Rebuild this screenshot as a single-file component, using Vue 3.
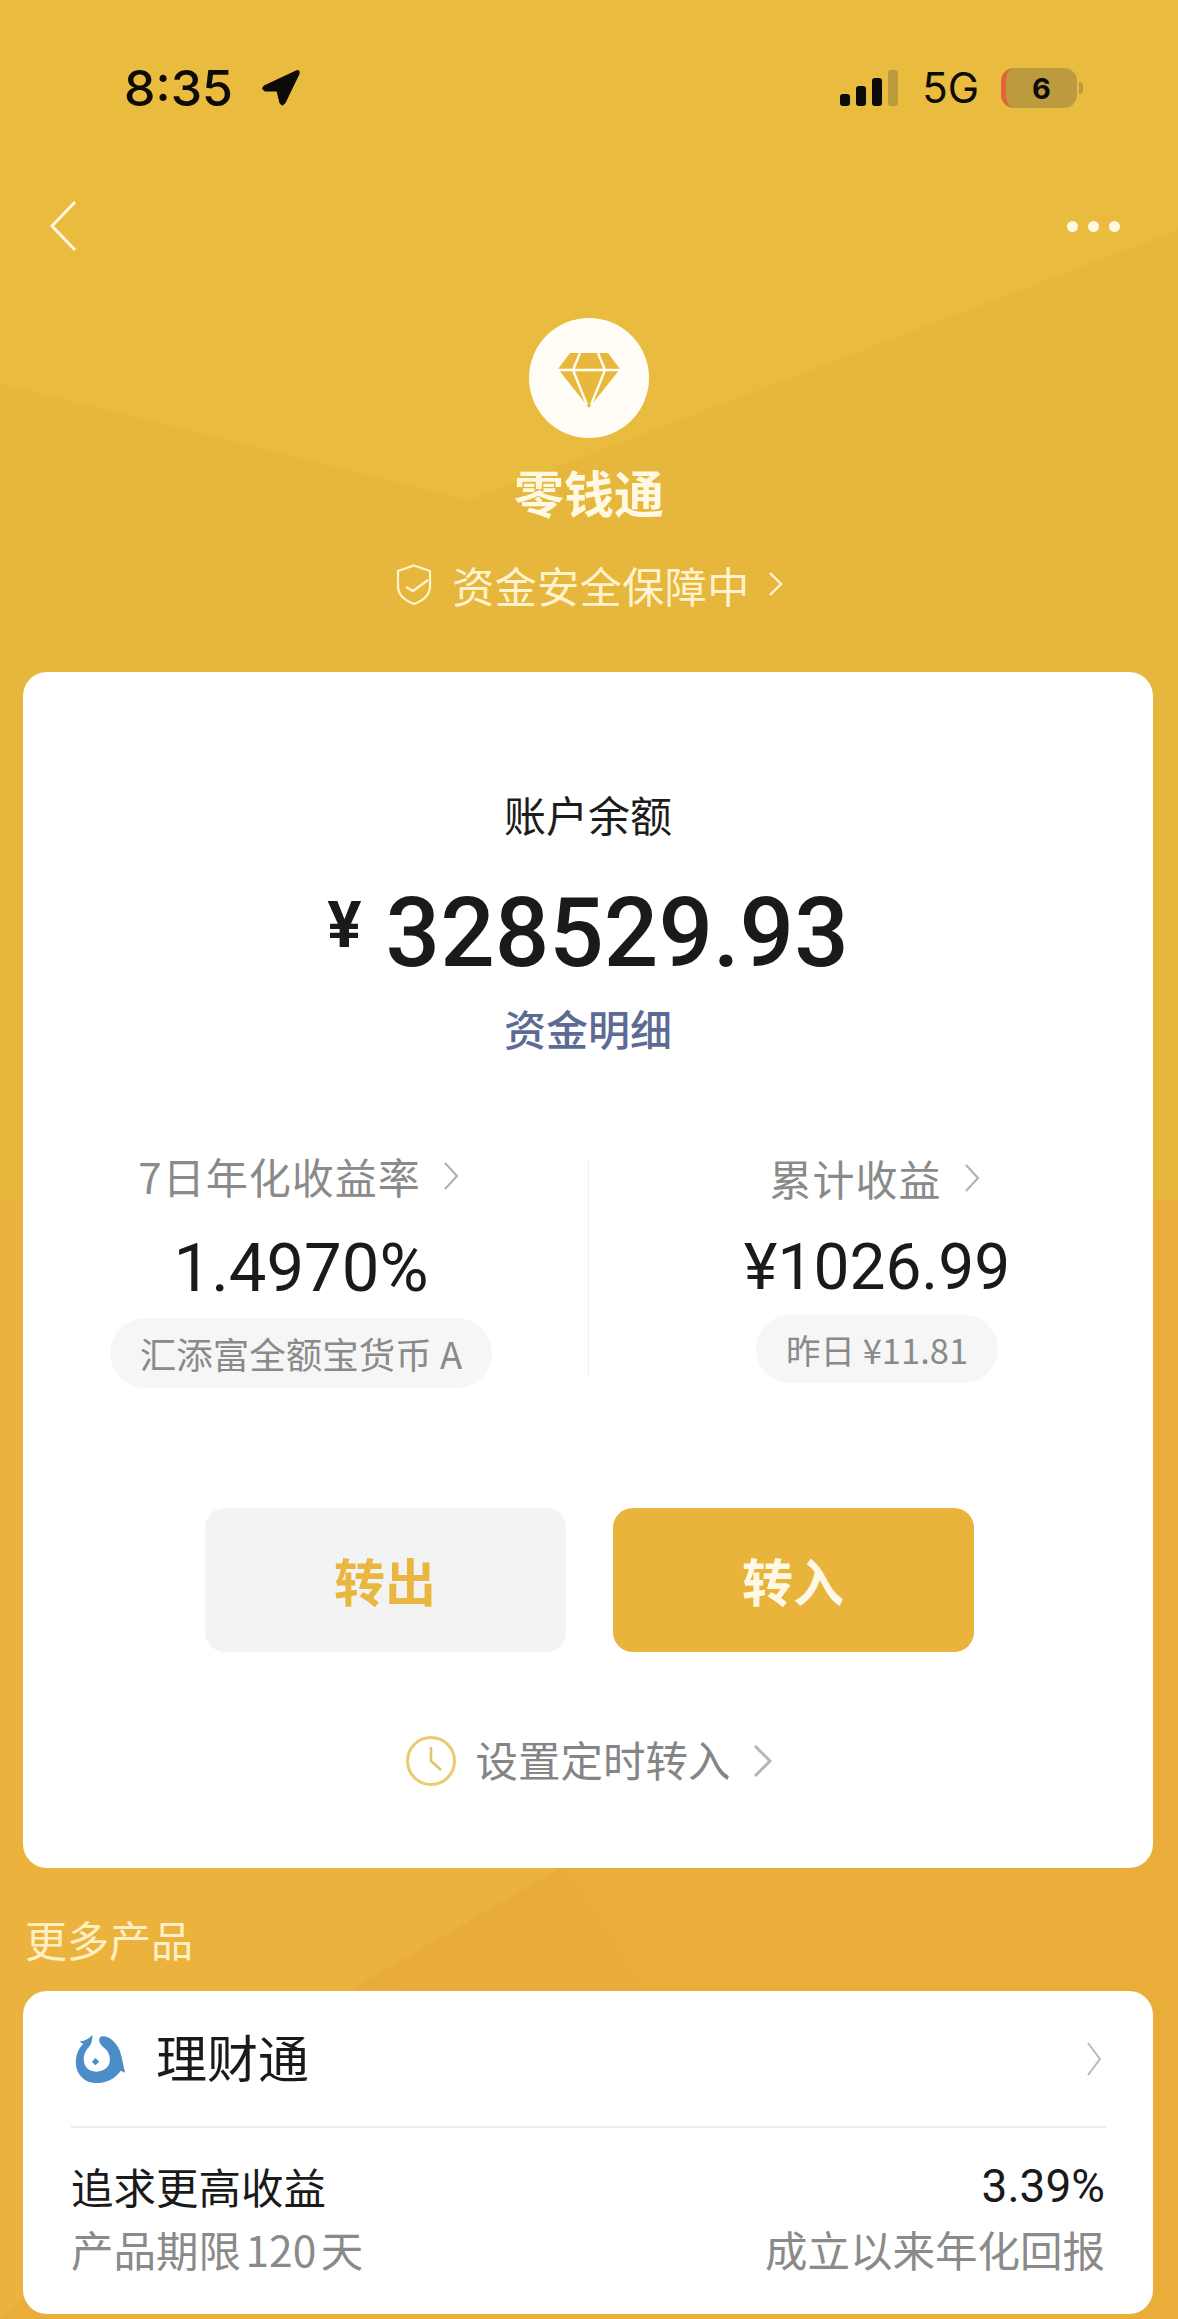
<template>
  <div class="page">
    <svg class="decor" width="1178" height="2319" viewBox="0 0 1178 2319" aria-hidden="true">
      <polygon points="0,384 470,500 1178,230 1178,1200 0,1200" fill="#E7B63C" />
      <polygon points="0,1200 1178,1200 1178,2319 0,2319" fill="#EAAD39" />
      <polygon points="0,1200 0,2319 300,2060 560,1868 700,1200" fill="#EBB33D" />
      <polygon points="560,1868 350,1990 640,1990" fill="#E9AC3A" />
    </svg>

    <div class="content">
      <header class="status">
        <div class="status-left">
          <span class="time">8:35</span>
          <svg class="arrow" width="40" height="38" viewBox="0 0 40 38">
            <path d="M3 17 L35 2 Q39 0 38 5 L24 34 Q21 38 19 34 L16 22 L4 22 Q0 20 3 17 Z" fill="#0d0b08" stroke="#0d0b08" stroke-width="1" />
          </svg>
        </div>
        <div class="status-right">
          <svg class="signal" width="58" height="36" viewBox="0 0 58 36">
            <rect x="0" y="24" width="10" height="12" rx="3" fill="#0d0b08" />
            <rect x="16" y="16" width="10" height="20" rx="3" fill="#0d0b08" />
            <rect x="32" y="8" width="10" height="28" rx="3" fill="#0d0b08" />
            <rect x="48" y="0" width="10" height="36" rx="3" fill="#BC9A3E" />
          </svg>
          <span class="net">5G</span>
          <div class="battery"><span>6</span></div>
          <span class="battery-tip"></span>
        </div>
      </header>

      <nav class="nav">
        <svg width="28" height="52" viewBox="0 0 28 52">
          <path d="M26 2 L3 26 L26 50" fill="none" stroke="#FFF8E2" stroke-width="3" />
        </svg>
        <div class="dots"><i></i><i></i><i></i></div>
      </nav>

      <section class="hero">
        <div class="gem-wrap">
          <svg class="gem" width="62" height="55" viewBox="0 0 62 55">
            <polygon points="12,0 50,0 62,16 31,55 0,16" fill="#E8B83C" />
            <path d="M0 17 H62 M22 0 L15 17 L29 52 M40 0 L47 17 L33 52" fill="none" stroke="#FFFDF5" stroke-width="2.4" />
          </svg>
        </div>
        <h1 class="title">零钱通</h1>
        <div class="safe">
          <svg width="36" height="41" viewBox="0 0 36 41">
            <path d="M18 1.5 L34 7 V22 C34 31 26 37 18 40 C10 37 2 31 2 22 V7 Z" fill="none" stroke="#FFF3CF" stroke-width="2.2" />
            <path d="M10 23 L17 27 L32 16" fill="none" stroke="#FFF3CF" stroke-width="2.4" />
          </svg>
          <span>资金安全保障中</span>
          <svg width="15" height="26" viewBox="0 0 15 26">
            <path d="M2 2 L13 13 L2 24" fill="none" stroke="#FFF3CF" stroke-width="2.4" />
          </svg>
        </div>
      </section>

      <main class="card balance">
        <div class="bal-label">账户余额</div>
        <div class="amount"><span class="yen">¥</span><span>328529.93</span></div>
        <div class="detail">资金明细</div>

        <div class="stats">
          <div class="stat left">
            <div class="stat-label">
              <span>7日年化收益率</span>
              <svg width="16" height="30" viewBox="0 0 16 30"><path d="M2 2 L14 15 L2 28" fill="none" stroke="#b3b3b3" stroke-width="2.2" /></svg>
            </div>
            <div class="stat-value">1.4970%</div>
            <div class="pill">汇添富全额宝货币 A</div>
          </div>
          <div class="divider"></div>
          <div class="stat right">
            <div class="stat-label">
              <span>累计收益</span>
              <svg width="16" height="30" viewBox="0 0 16 30"><path d="M2 2 L14 15 L2 28" fill="none" stroke="#b3b3b3" stroke-width="2.2" /></svg>
            </div>
            <div class="stat-value">¥1026.99</div>
            <div class="pill">昨日 ¥11.81</div>
          </div>
        </div>

        <div class="buttons">
          <div class="btn out">转出</div>
          <div class="btn in">转入</div>
        </div>

        <div class="timer">
          <svg width="52" height="52" viewBox="0 0 52 52">
            <circle cx="26" cy="26" r="23.5" fill="none" stroke="#EBCB70" stroke-width="3" />
            <path d="M26 12 V26 L36 35" fill="none" stroke="#E3C270" stroke-width="2.6" />
          </svg>
          <span>设置定时转入</span>
          <svg width="20" height="34" viewBox="0 0 20 34"><path d="M2 2 L17 17 L2 32" fill="none" stroke="#b5b5b5" stroke-width="3" /></svg>
        </div>
      </main>

      <div class="more">更多产品</div>

      <section class="card product">
        <div class="prod-head">
          <svg class="logo" width="51" height="50" viewBox="76 100 152 150">
            <path d="M150 110 C165 100 195 115 210 150 C218 175 220 195 226 216 L213 210 C195 236 165 249 135 247 C105 246 80 222 78 190 C77 165 85 145 100 130 L88 122 C100 122 118 115 128 102 C128 118 125 128 118 138 C100 155 98 180 107 196 C118 216 152 220 172 200 C184 186 182 165 172 150 C160 138 142 128 150 110 Z M137 172 L148 183 L137 194 L126 183 Z" fill="#4A8DC9" />
          </svg>
          <span class="prod-name">理财通</span>
          <svg class="prod-chev" width="16" height="36" viewBox="0 0 16 36"><path d="M2 2 L14 18 L2 34" fill="none" stroke="#b8b8b8" stroke-width="2" /></svg>
        </div>
        <div class="prod-line"></div>
        <div class="prod-row first"><span>追求更高收益</span><span class="num">3.39%</span></div>
        <div class="prod-row second"><span class="term">产品期限 120 天</span><span>成立以来年化回报</span></div>
      </section>
    </div>
  </div>
</template>

<script setup>
</script>

<style>
html, body { margin: 0; padding: 0; }
</style>

<style scoped>
.page {
  position: relative;
  width: 1178px;
  height: 2319px;
  overflow: hidden;
  background: #E9BB3E;
  font-family: "Noto Sans CJK SC", "Liberation Sans", sans-serif;
}
.decor { position: absolute; left: 0; top: 0; }
.content { position: relative; }

.status {
  display: flex;
  justify-content: space-between;
  align-items: center;
  height: 50px;
  padding: 63px 95px 0 124px;
}
.status-left { display: flex; align-items: center; gap: 28px; }
.time {
  font-family: Inter, "Liberation Sans", sans-serif;
  font-weight: 500;
  font-size: 50px;
  line-height: 50px;
  color: #0d0b08;
}
.status-right { display: flex; align-items: center; }
.net {
  font-family: Inter, "Liberation Sans", sans-serif;
  font-size: 42px;
  line-height: 50px;
  color: #0d0b08;
  margin: 0 22px 0 24px;
}
.battery {
  position: relative;
  width: 76px;
  height: 40px;
  box-sizing: border-box;
  border-radius: 13px;
  background: #BC9A3E;
  border-left: 5px solid #E0633A;
  display: flex;
  align-items: center;
  justify-content: center;
  font-family: Inter, "Liberation Sans", sans-serif;
  font-weight: 700;
  font-size: 29px;
  color: #0d0b08;
}
.battery-tip {
  width: 4px;
  height: 12px;
  margin-left: 2px;
  border-radius: 0 4px 4px 0;
  background: #BC9A3E;
}

.nav {
  display: flex;
  justify-content: space-between;
  align-items: center;
  height: 52px;
  margin-top: 87px;
  padding: 0 58px 0 49px;
}
.dots { display: flex; gap: 10px; }
.dots i { width: 11px; height: 11px; border-radius: 50%; background: #FFF8E2; }

.hero { display: flex; flex-direction: column; align-items: center; margin-top: 66px; }
.gem-wrap {
  width: 120px;
  height: 120px;
  border-radius: 50%;
  background: #FFFDF5;
  display: flex;
  align-items: center;
  justify-content: center;
}
.gem { margin-top: 5px; }
.title {
  margin: 23px 0 0;
  font-size: 50px;
  line-height: 60px;
  font-weight: 700;
  color: #FFF8E2;
}
.safe {
  display: flex;
  align-items: center;
  height: 50px;
  margin-top: 38px;
  margin-left: 1px;
  font-size: 42px;
  letter-spacing: 0.5px;
  color: #FFF3CF;
}
.safe span { margin: 0 18px 0 20px; }

.card {
  margin: 0 25px 0 23px;
  background: #fff;
  border-radius: 24px;
}
.balance {
  margin-top: 63px;
  padding: 117px 0 81px;
  display: flex;
  flex-direction: column;
  align-items: center;
}
.bal-label {
  font-size: 42px;
  line-height: 50px;
  color: #1c1c1c;
}
.amount {
  display: flex;
  align-items: center;
  gap: 24px;
  margin-top: 44px;
  font-family: Roboto, "Liberation Sans", sans-serif;
  font-weight: 500;
  font-size: 96px;
  line-height: 100px;
  color: #1a1a1a;
}
.yen { font-size: 64px; line-height: 64px; margin-bottom: 14px; font-weight: 700; }
.detail {
  margin-top: 20px;
  font-size: 42px;
  line-height: 50px;
  font-weight: 500;
  color: #5D6B94;
}

.stats { display: flex; width: 100%; margin-top: 98px; }
.stat { display: flex; flex-direction: column; align-items: center; }
.stat.left { width: 556px; flex: none; }
.stat.right { flex: 1; padding: 2px 0 0 12px; }
.divider { width: 1px; height: 215px; margin: 9px 0 0 9px; background: #EFEFEF; flex: none; }
.stat-label {
  display: flex;
  align-items: center;
  gap: 22px;
  padding-right: 5px;
  font-size: 42px;
  letter-spacing: 1px;
  line-height: 50px;
  color: #8a8a8a;
}
.stat-value {
  margin-top: 27px;
  font-family: Roboto, "Liberation Sans", sans-serif;
  font-size: 67px;
  line-height: 80px;
  color: #1a1a1a;
}
.right .stat-value { margin-top: 25px; font-size: 64px; }
.pill {
  margin-top: 10px;
  height: 70px;
  padding: 0 30px;
  border-radius: 35px;
  background: #F6F6F6;
  display: flex;
  align-items: center;
  font-size: 36.5px;
  color: #8a8a8a;
}
.right .pill { margin-top: 7px; height: 68px; border-radius: 34px; padding: 0 30px; font-size: 34.5px; }

.buttons { display: flex; gap: 47px; margin: 120px 0 0 2px; }
.btn {
  width: 361px;
  height: 144px;
  border-radius: 20px;
  display: flex;
  align-items: center;
  justify-content: center;
  font-size: 51px;
  font-weight: 700;
}
.btn.out { background: #F3F3F3; color: #E9B73F; }
.btn.in { background: #E8B43C; color: #FFF8E6; }

.timer {
  display: flex;
  align-items: center;
  gap: 18px;
  height: 52px;
  margin: 83px 0 0 2px;
  font-size: 42.5px;
  color: #858585;
}
.timer span { margin: 0 4px 6px 0; }

.more {
  margin-top: 46px;
  padding-left: 25px;
  font-size: 42px;
  line-height: 50px;
  color: #FFF0C4;
}

.product { margin-top: 27px; height: 323px; }
.prod-head {
  display: flex;
  align-items: center;
  height: 135px;
  padding: 0 51px 0 52px;
}
.prod-name {
  margin: 0 0 5px 30px;
  font-size: 51px;
  color: #1a1a1a;
}
.prod-chev { margin-left: auto; }
.prod-line { height: 2px; margin: 0 47px 0 48px; background: #ECECEC; }
.prod-row {
  display: flex;
  justify-content: space-between;
  padding: 0 48px;
  line-height: 56px;
  font-size: 42.5px;
}
.prod-row.first { margin-top: 30px; color: #1a1a1a; }
.prod-row.second { margin-top: 7px; color: #8a8a8a; }
.term { word-spacing: -5px; }
.num { font-family: Roboto, "Liberation Sans", sans-serif; font-size: 46px; }
</style>
